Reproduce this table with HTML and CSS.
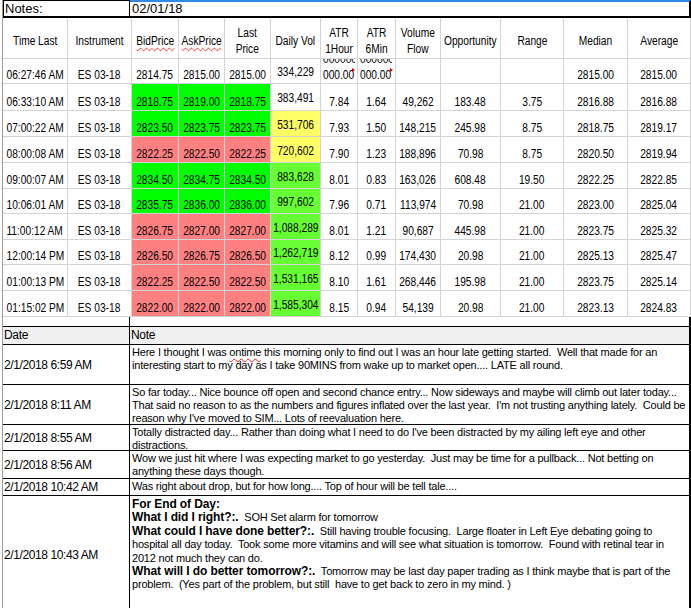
FILE: index.html
```
<!DOCTYPE html>
<html>
<head>
<meta charset="utf-8">
<title>Trading Notes</title>
<link rel="stylesheet" href="styles.css">
</head>
<body>
<div class="sheet">
  <div class="notes-bar">
    <div class="nb-label">Notes:</div>
    <div class="nb-date">02/01/18</div>
  </div>

  <div class="grid">
    <div class="h"><span class="n">Time Last</span></div>
    <div class="h"><span class="n">Instrument</span></div>
    <div class="h"><span class="n"><span class="spell">BidPrice</span></span></div>
    <div class="h"><span class="n"><span class="spell">AskPrice</span></span></div>
    <div class="h"><span class="n">Last<br>Price</span></div>
    <div class="h"><span class="n">Daily Vol</span></div>
    <div class="h"><span class="n">ATR<br>1Hour</span></div>
    <div class="h"><span class="n">ATR<br>6Min</span></div>
    <div class="h"><span class="n">Volume<br>Flow</span></div>
    <div class="h"><span class="n">Opportunity</span></div>
    <div class="h"><span class="n">Range</span></div>
    <div class="h"><span class="n">Median</span></div>
    <div class="h"><span class="n">Average</span></div>

    <div class="c"><span class="n">06:27:46 AM</span></div><div class="c"><span class="n">ES 03-18</span></div>
    <div class="c"><span class="n">2814.75</span></div><div class="c"><span class="n">2815.00</span></div><div class="c"><span class="n">2815.00</span></div>
    <div class="c vol"><span class="n">334,229</span></div>
    <div class="c atr"><div class="l1"><span>0000000000</span></div><div class="l2">000.00</div><i class="flag"></i></div>
    <div class="c atr"><div class="l1"><span>0000000000</span></div><div class="l2">000.00</div><i class="flag"></i></div>
    <div class="c"></div><div class="c"></div><div class="c"></div>
    <div class="c"><span class="n">2815.00</span></div><div class="c"><span class="n">2815.00</span></div>

    <div class="c"><span class="n">06:33:10 AM</span></div><div class="c"><span class="n">ES 03-18</span></div>
    <div class="c g"><span class="n">2818.75</span></div><div class="c g"><span class="n">2819.00</span></div><div class="c g"><span class="n">2818.75</span></div>
    <div class="c vol"><span class="n">383,491</span></div>
    <div class="c"><span class="n">7.84</span></div><div class="c"><span class="n">1.64</span></div><div class="c"><span class="n">49,262</span></div><div class="c"><span class="n">183.48</span></div><div class="c"><span class="n">3.75</span></div>
    <div class="c"><span class="n">2816.88</span></div><div class="c"><span class="n">2816.88</span></div>

    <div class="c"><span class="n">07:00:22 AM</span></div><div class="c"><span class="n">ES 03-18</span></div>
    <div class="c g"><span class="n">2823.50</span></div><div class="c g"><span class="n">2823.75</span></div><div class="c g"><span class="n">2823.75</span></div>
    <div class="c vol y"><span class="n">531,706</span></div>
    <div class="c"><span class="n">7.93</span></div><div class="c"><span class="n">1.50</span></div><div class="c"><span class="n">148,215</span></div><div class="c"><span class="n">245.98</span></div><div class="c"><span class="n">8.75</span></div>
    <div class="c"><span class="n">2818.75</span></div><div class="c"><span class="n">2819.17</span></div>

    <div class="c"><span class="n">08:00:08 AM</span></div><div class="c"><span class="n">ES 03-18</span></div>
    <div class="c r"><span class="n">2822.25</span></div><div class="c r"><span class="n">2822.50</span></div><div class="c r"><span class="n">2822.25</span></div>
    <div class="c vol y"><span class="n">720,602</span></div>
    <div class="c"><span class="n">7.90</span></div><div class="c"><span class="n">1.23</span></div><div class="c"><span class="n">188,896</span></div><div class="c"><span class="n">70.98</span></div><div class="c"><span class="n">8.75</span></div>
    <div class="c"><span class="n">2820.50</span></div><div class="c"><span class="n">2819.94</span></div>

    <div class="c"><span class="n">09:00:07 AM</span></div><div class="c"><span class="n">ES 03-18</span></div>
    <div class="c g"><span class="n">2834.50</span></div><div class="c g"><span class="n">2834.75</span></div><div class="c g"><span class="n">2834.50</span></div>
    <div class="c vol lg"><span class="n">883,628</span></div>
    <div class="c"><span class="n">8.01</span></div><div class="c"><span class="n">0.83</span></div><div class="c"><span class="n">163,026</span></div><div class="c"><span class="n">608.48</span></div><div class="c"><span class="n">19.50</span></div>
    <div class="c"><span class="n">2822.25</span></div><div class="c"><span class="n">2822.85</span></div>

    <div class="c"><span class="n">10:06:01 AM</span></div><div class="c"><span class="n">ES 03-18</span></div>
    <div class="c g"><span class="n">2835.75</span></div><div class="c g"><span class="n">2836.00</span></div><div class="c g"><span class="n">2836.00</span></div>
    <div class="c vol lg"><span class="n">997,602</span></div>
    <div class="c"><span class="n">7.96</span></div><div class="c"><span class="n">0.71</span></div><div class="c"><span class="n">113,974</span></div><div class="c"><span class="n">70.98</span></div><div class="c"><span class="n">21.00</span></div>
    <div class="c"><span class="n">2823.00</span></div><div class="c"><span class="n">2825.04</span></div>

    <div class="c"><span class="n">11:00:12 AM</span></div><div class="c"><span class="n">ES 03-18</span></div>
    <div class="c r"><span class="n">2826.75</span></div><div class="c r"><span class="n">2827.00</span></div><div class="c r"><span class="n">2827.00</span></div>
    <div class="c vol lg"><span class="n">1,088,289</span></div>
    <div class="c"><span class="n">8.01</span></div><div class="c"><span class="n">1.21</span></div><div class="c"><span class="n">90,687</span></div><div class="c"><span class="n">445.98</span></div><div class="c"><span class="n">21.00</span></div>
    <div class="c"><span class="n">2823.75</span></div><div class="c"><span class="n">2825.32</span></div>

    <div class="c"><span class="n">12:00:14 PM</span></div><div class="c"><span class="n">ES 03-18</span></div>
    <div class="c r"><span class="n">2826.50</span></div><div class="c r"><span class="n">2826.75</span></div><div class="c r"><span class="n">2826.50</span></div>
    <div class="c vol lg"><span class="n">1,262,719</span></div>
    <div class="c"><span class="n">8.12</span></div><div class="c"><span class="n">0.99</span></div><div class="c"><span class="n">174,430</span></div><div class="c"><span class="n">20.98</span></div><div class="c"><span class="n">21.00</span></div>
    <div class="c"><span class="n">2825.13</span></div><div class="c"><span class="n">2825.47</span></div>

    <div class="c"><span class="n">01:00:13 PM</span></div><div class="c"><span class="n">ES 03-18</span></div>
    <div class="c r"><span class="n">2822.25</span></div><div class="c r"><span class="n">2822.50</span></div><div class="c r"><span class="n">2822.50</span></div>
    <div class="c vol lg"><span class="n">1,531,165</span></div>
    <div class="c"><span class="n">8.10</span></div><div class="c"><span class="n">1.61</span></div><div class="c"><span class="n">268,446</span></div><div class="c"><span class="n">195.98</span></div><div class="c"><span class="n">21.00</span></div>
    <div class="c"><span class="n">2823.75</span></div><div class="c"><span class="n">2825.14</span></div>

    <div class="c"><span class="n">01:15:02 PM</span></div><div class="c"><span class="n">ES 03-18</span></div>
    <div class="c r"><span class="n">2822.00</span></div><div class="c r"><span class="n">2822.00</span></div><div class="c r"><span class="n">2822.00</span></div>
    <div class="c vol lg"><span class="n">1,585,304</span></div>
    <div class="c"><span class="n">8.15</span></div><div class="c"><span class="n">0.94</span></div><div class="c"><span class="n">54,139</span></div><div class="c"><span class="n">20.98</span></div><div class="c"><span class="n">21.00</span></div>
    <div class="c"><span class="n">2823.13</span></div><div class="c"><span class="n">2824.83</span></div>
  </div>

  <div class="log">
    <div class="gap-cell"></div><div class="gap-cell"></div>
    <div class="lh">Date</div><div class="lh">Note</div>

    <div class="ld">2/1/2018 6:59 AM</div>
    <div class="ln"><div>Here I thought I was <span class="spell">ontime</span> this morning only to find out I was an hour late getting started.  Well that made for an</div><div>interesting start to my day as I take 90MINS from wake up to market open.... LATE all round.</div></div>

    <div class="ld">2/1/2018 8:11 AM</div>
    <div class="ln"><div>So far today... Nice bounce off open and second chance entry... Now sideways and maybe will climb out later today...</div><div>That said no reason to as the numbers and figures inflated over the last year.  I'm not trusting anything lately.  Could be</div><div>reason why I've moved to SIM... Lots of reevaluation here.</div></div>

    <div class="ld">2/1/2018 8:55 AM</div>
    <div class="ln"><div>Totally distracted day... Rather than doing what I need to do I've been distracted by my ailing left eye and other</div><div>distractions.</div></div>

    <div class="ld">2/1/2018 8:56 AM</div>
    <div class="ln"><div>Wow we just hit where I was expecting market to go yesterday.  Just may be time for a pullback... Not betting on</div><div>anything these days though.</div></div>

    <div class="ld">2/1/2018 10:42 AM</div>
    <div class="ln"><div>Was right about drop, but for how long.... Top of hour will be tell tale....</div></div>

    <div class="ld">2/1/2018 10:43 AM</div>
    <div class="ln last"><div><b>For End of Day:</b></div><div><b>What I did I right?:.</b>  SOH Set alarm for tomorrow</div><div><b>What could I have done better?:.</b>  Still having trouble focusing.  Large floater in Left Eye debating going to</div><div>hospital all day today.  Took some more vitamins and will see what situation is tomorrow.  Found with retinal tear in</div><div>2012 not much they can do.</div><div><b>What will I do better tomorrow?:.</b>  Tomorrow may be last day paper trading as I think maybe that is part of the</div><div>problem.  (Yes part of the problem, but still  have to get back to zero in my mind. )</div></div>
  </div>
</div>
</body>
</html>
```

FILE: styles.css
```
html, body {
  margin: 0;
  padding: 0;
  background: #ffffff;
  overflow: hidden;
}

.sheet {
  margin-left: 2px;
  border-left: 1px solid #9c9c9c;
  width: 688px;
  height: 608px;
  overflow: hidden;
  color: #000;
}

/* Notes bar */
.notes-bar {
  display: flex;
  height: 18px;
  font-family: "Liberation Sans", Arial, sans-serif;
  font-size: 13px;
  line-height: 14px;
}
.nb-label {
  box-sizing: border-box;
  width: 127px;
  border-top: 1px solid #000;
  border-left: 1px solid #000;
  border-right: 1px solid #000;
  border-bottom: 2px solid #000;
  padding: 1px 0 0 1px;
}
.nb-date {
  box-sizing: border-box;
  flex: 1;
  border-top: 2px solid #2e8ae6;
  border-right: 2px solid #000;
  border-bottom: 2px solid #000;
  padding: 0 0 0 2px;
}

/* Data grid */
.grid {
  display: grid;
  grid-template-columns: 64px 63px 46px 45px 45px 49px 36px 37px 44px 59px 62px 63px 62px;
  grid-template-rows: 40px 24px 26px 25px 25px 25px 24px 25px 24px 25px 25px;
  gap: 1px;
  background: #d4d4d4;
  border-right: 1px solid #d4d4d4;
  border-bottom: 1px solid #d4d4d4;
  font-family: "Liberation Sans", Arial, sans-serif;
  font-size: 12.5px;
}
.n {
  display: inline-block;
  flex: none;
  transform: scaleX(0.815);
  white-space: nowrap;
}
.h {
  background: #fff;
  display: flex;
  align-items: center;
  justify-content: center;
  text-align: center;
  line-height: 16px;
  padding-top: 5px;
  overflow: hidden;
}
.c {
  background: #fff;
  display: flex;
  align-items: flex-end;
  justify-content: center;
  line-height: 14px;
  padding-bottom: 1px;
  overflow: hidden;
}
.c.vol { align-items: center; padding-bottom: 0; padding-top: 2px; }
.g { background: #00ff00; }
.r { background: #ff8080; }
.y { background: #ffff66; }
.lg { background: #66ff33; }

.spell {
  text-decoration: underline wavy #e02020;
  text-decoration-thickness: 1px;
  text-underline-offset: 2px;
  text-decoration-skip-ink: none;
}

.c.atr {
  position: relative;
  flex-direction: column;
  align-items: flex-start;
  justify-content: flex-end;
  padding-left: 2px;
}
.atr .l1 {
  height: 4px;
  width: 32px;
  margin-bottom: 5px;
  overflow: hidden;
  position: relative;
}
.atr .l1 span {
  position: absolute;
  left: 0;
  bottom: -1px;
  line-height: 10px;
  white-space: nowrap;
  transform: scaleX(0.815);
  transform-origin: left bottom;
}
.atr .l2 {
  line-height: 14px;
  white-space: nowrap;
  transform: scaleX(0.815);
  transform-origin: left center;
}
.flag {
  position: absolute;
  right: 2px;
  top: 9px;
  width: 0;
  height: 0;
  border-left: 3px solid #e00000;
  border-top: 2px solid transparent;
  border-bottom: 2px solid transparent;
}

/* Notes log */
.log {
  display: grid;
  grid-template-columns: 126px 559px;
  grid-template-rows: 9px 17px 39px 39px 25px 27px 16px 118px;
  gap: 1px;
  background: #000;
  border-right: 2px solid #000;
  font-family: "Liberation Sans", Arial, sans-serif;
}
.gap-cell { background: #fff; }
.lh {
  background: #f0f0f0;
  font-size: 12px;
  line-height: 17px;
  padding-left: 1px;
  letter-spacing: -0.3px;
}
.ld {
  background: #fff;
  display: flex;
  align-items: center;
  padding-left: 1px;
  font-size: 12px;
  letter-spacing: -0.4px;
  white-space: nowrap;
}
.ln {
  background: #fff;
  font-size: 11px;
  line-height: 13px;
  letter-spacing: -0.2px;
  padding: 1px 0 0 2px;
  overflow: hidden;
}
.ln > div { white-space: pre; }
.ln b { font-weight: bold; font-size: 12px; letter-spacing: -0.1px; }
.ln.last { padding-top: 2px; line-height: 13.4px; }
```
